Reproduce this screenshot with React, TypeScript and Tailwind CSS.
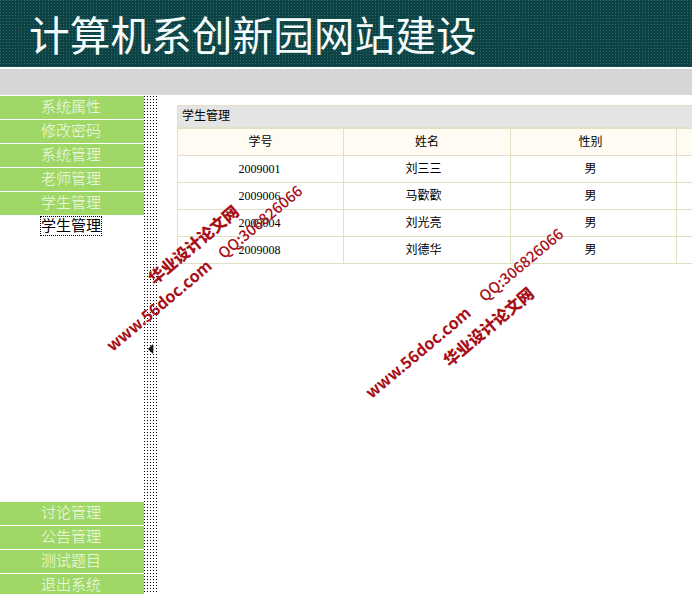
import React from 'react';

const CJK = "font-['Liberation_Serif','Noto_Sans_CJK_SC',serif]";

const TOP_MENU = ['系统属性', '修改密码', '系统管理', '老师管理', '学生管理'];
const BOTTOM_MENU = ['讨论管理', '公告管理', '测试题目', '退出系统'];

const STUDENTS = [
  { id: '2009001', name: '刘三三', sex: '男' },
  { id: '2009006', name: '马歡歡', sex: '男' },
  { id: '2009004', name: '刘光亮', sex: '男' },
  { id: '2009008', name: '刘德华', sex: '男' },
];

function MenuItem({ label }: { label: string }) {
  return (
    <div className="h-6 shrink-0 border-b border-white bg-[#a0d868] pr-[2px] text-center text-[15px] leading-[22px] font-light text-[#f4fbe8]">
      {label}
    </div>
  );
}

// Red diagonal stamps that sit over the page
function Stamp({ className, children }: { className: string; children: React.ReactNode }) {
  return (
    <span className={`absolute origin-left -rotate-[40deg] whitespace-nowrap font-['Noto_Sans_CJK_SC',sans-serif] leading-[20px] text-[#a80f18] ${className}`}>
      {children}
    </span>
  );
}

export default function App() {
  return (
    <div className={`relative flex h-[594px] w-[692px] flex-col overflow-hidden bg-white ${CJK}`}>
      {/* Header */}
      <header className="h-[67px] shrink-0 bg-[linear-gradient(90deg,transparent_1px,#0d4345_1px),linear-gradient(transparent_1px,#0d4345_1px)] bg-[size:3px_3px] bg-[#2c6c6c] pl-[29px] text-[40.7px] leading-[76px] text-[#f4fbfa]">
        计算机系创新园网站建设
      </header>
      <div className="h-[2px] shrink-0 bg-white" />
      <div className="h-[26px] shrink-0 bg-[#d6d6d6]" />
      <div className="h-px shrink-0 bg-white" />

      <div className="flex min-h-0 flex-1">
        {/* Sidebar */}
        <aside className="flex h-[502px] w-[144px] shrink-0 flex-col">
          {TOP_MENU.map((m) => (
            <MenuItem key={m} label={m} />
          ))}
          <div className="flex h-[24px] justify-center pr-[2px]">
            <span className="h-[20px] border border-dotted border-black text-[15px] leading-[18px] text-black">学生管理</span>
          </div>
          <div className="flex-1" />
          {BOTTOM_MENU.map((m) => (
            <MenuItem key={m} label={m} />
          ))}
        </aside>

        {/* Splitter */}
        <div className="flex w-[14px] shrink-0 items-center justify-center bg-[linear-gradient(90deg,transparent_1px,#fff_1px),linear-gradient(transparent_1px,#fff_1px)] bg-[size:3px_3px] bg-black">
          <svg width="8" height="10" viewBox="0 0 8 10" className="mt-[8px]">
            <path d="M6 0 L1 5 L6 10 Z" fill="#111" />
            <rect x="6" y="1" width="1" height="8" fill="#7ba" />
          </svg>
        </div>

        {/* Main */}
        <main className="min-w-0 flex-1 pt-[9px] pl-[19px]">
          <div className="w-[600px] text-[12px] text-black">
            <div className="h-[23px] border border-[#e0e0c4] bg-[#e4e4e4] pl-[4px] leading-[21px]">学生管理</div>
            <table className="w-full table-fixed border-collapse">
              <colgroup>
                <col className="w-[166px]" />
                <col className="w-[167px]" />
                <col className="w-[166px]" />
                <col />
              </colgroup>
              <thead>
                <tr className="h-[27px] bg-[#fffbf3]">
                  {['学号', '姓名', '性别', ''].map((h, i) => (
                    <th key={i} className={`border border-[#e0e0c4] p-0 font-normal ${i === 2 ? 'pr-[6px]' : ''}`}>{h}</th>
                  ))}
                </tr>
              </thead>
              <tbody>
                {STUDENTS.map((s) => (
                  <tr key={s.id} className="h-[27px] text-center">
                    <td className="border border-[#e0e0c4] p-0 pr-[2px]">{s.id}</td>
                    <td className="border border-[#e0e0c4] p-0 pr-[7px]">{s.name}</td>
                    <td className="border border-[#e0e0c4] p-0 pr-[6px]">{s.sex}</td>
                    <td className="border border-[#e0e0c4] p-0" />
                  </tr>
                ))}
              </tbody>
            </table>
          </div>
        </main>
      </div>

      <Stamp className="left-[150px] top-[270px] text-[16px] font-black">华业设计论文网</Stamp>
      <Stamp className="left-[108px] top-[337px] text-[16px] font-bold">www.56doc.com</Stamp>
      <Stamp className="left-[220px] top-[245px] text-[15px] font-medium">QQ:306826066</Stamp>
      <Stamp className="left-[445px] top-[352px] text-[16px] font-black">华业设计论文网</Stamp>
      <Stamp className="left-[367px] top-[384px] text-[16px] font-bold">www.56doc.com</Stamp>
      <Stamp className="left-[481px] top-[288px] text-[15px] font-medium">QQ:306826066</Stamp>
    </div>
  );
}
